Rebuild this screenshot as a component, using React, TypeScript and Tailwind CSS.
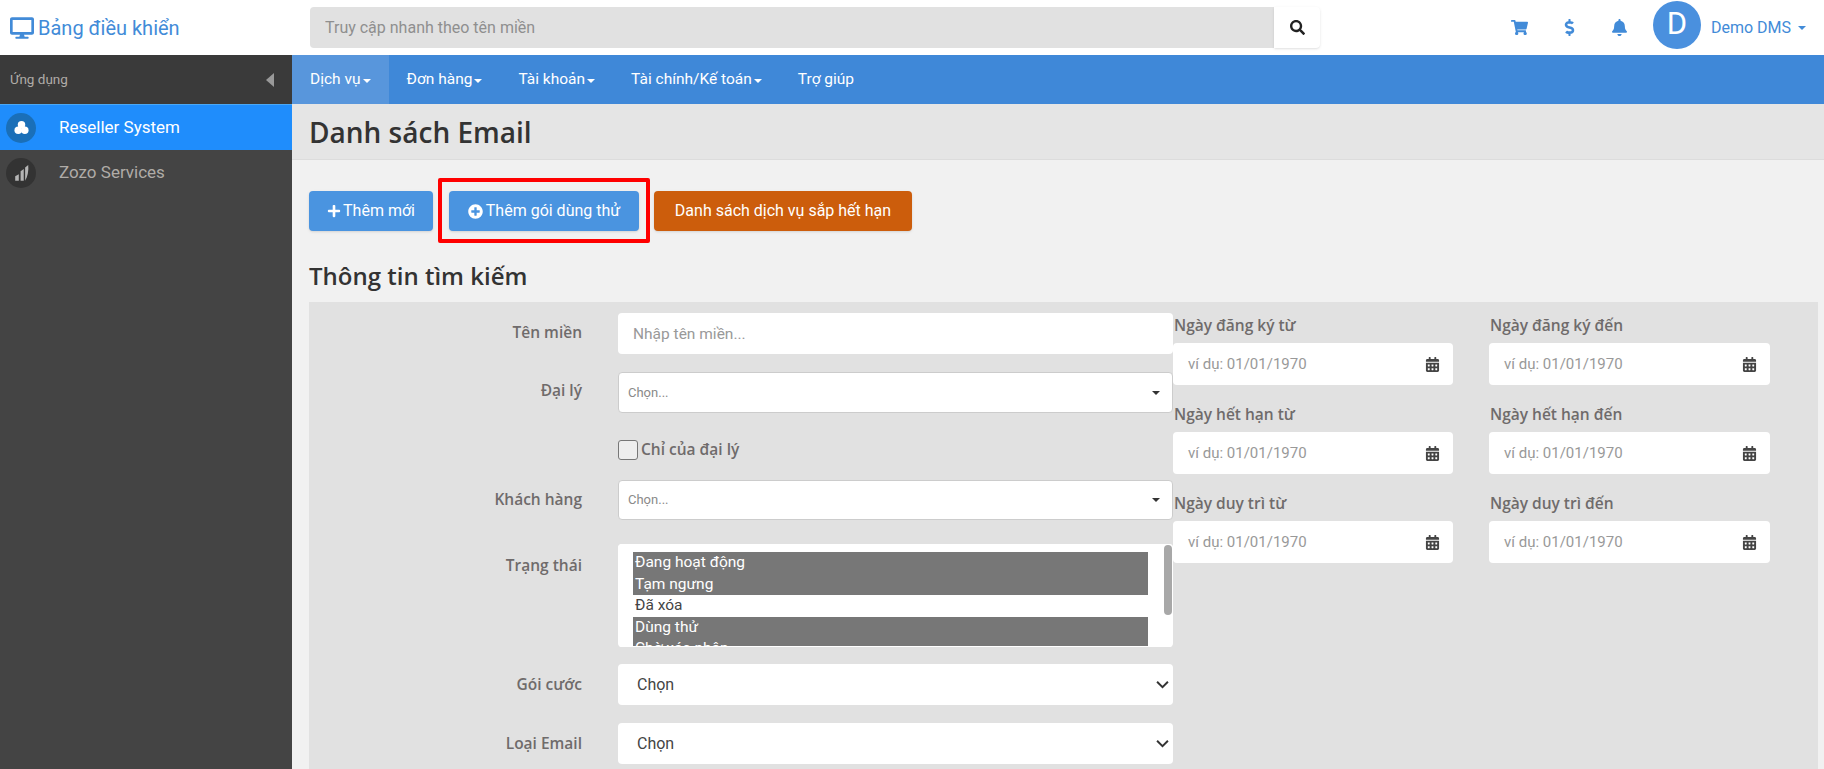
import { FaBell, FaCalendarAlt, FaDesktop, FaDollarSign, FaPlus, FaPlusCircle, FaSearch, FaShoppingCart } from "react-icons/fa";

const navItems = [
  { label: "Dịch vụ", caret: true, active: true },
  { label: "Đơn hàng", caret: true },
  { label: "Tài khoản", caret: true },
  { label: "Tài chính/Kế toán", caret: true },
  { label: "Trợ giúp" },
];

const dateRows = [
  ["Ngày đăng ký từ", "Ngày đăng ký đến"],
  ["Ngày hết hạn từ", "Ngày hết hạn đến"],
  ["Ngày duy trì từ", "Ngày duy trì đến"],
];

function Caret({ className }: { className: string }) {
  return <span className={`inline-block border-x-[4px] border-t-[4px] border-x-transparent ${className}`} />;
}

function ResellerIcon() {
  return (
    <svg viewBox="0 0 16 16" className="w-[15px] h-[15px]" fill="#fff">
      <circle cx="8" cy="5" r="4" />
      <circle cx="4.5" cy="11" r="4" />
      <circle cx="11.5" cy="11" r="4" />
    </svg>
  );
}

function ZozoIcon() {
  return (
    <svg viewBox="0 0 16 20" className="w-[15px] h-[18px]" fill="#b5b5b5">
      <path d="M1 13.5 5 11.5v7H1z" />
      <path d="M7 8l3.500-2.500V18.500H7z" />
      <path d="M12 4 15.500 1c.5 6-.5 13-3.500 17.500z" />
    </svg>
  );
}

function Label({ children, className = "" }: { children: string; className?: string }) {
  return <label className={`font-['Open_Sans',sans-serif] font-semibold text-[15.500px] text-[#6f6b6b] ${className}`}>{children}</label>;
}

function FormRow({ label, className, children }: { label: string; className: string; children: React.ReactNode }) {
  return (
    <div className={`flex gap-[36px] ${className}`}>
      <div className="w-[273px] shrink-0 text-right">
        <Label>{label}</Label>
      </div>
      <div className="w-[555px]">{children}</div>
    </div>
  );
}

function ComboBox() {
  return (
    <div className="h-full bg-white rounded border border-[#ccc] flex items-center justify-between pl-[9px] pr-[12px]">
      <span className="text-[13px] text-[#8a8a8a]">Chọn...</span>
      <Caret className="border-t-[#333]" />
    </div>
  );
}

function NativeSelect() {
  return (
    <div className="h-full bg-white rounded flex items-center justify-between pl-[19px] pr-[4px]">
      <span className="text-[16px] text-[#444]">Chọn</span>
      <svg viewBox="0 0 12 8" className="w-[13px] h-[9px]" fill="none" stroke="#333" strokeWidth="1.800">
        <path d="M1 1.500 6 6.500 11 1.500" />
      </svg>
    </div>
  );
}

function DateField({ label, className }: { label: string; className: string }) {
  return (
    <div className={className}>
      <Label className="block leading-[22px] ml-[1px]">{label}</Label>
      <div className="h-[42px] mt-[7px] bg-white rounded flex items-center justify-between pl-[15px] pr-[13px]">
        <span className="text-[15px] text-[#999]">ví dụ: 01/01/1970</span>
        <FaCalendarAlt className="text-[#444] text-[15px]" />
      </div>
    </div>
  );
}

export default function App() {
  return (
    <div className="w-[1824px] h-[769px] overflow-hidden flex flex-col bg-[#f1f1f1] font-['Roboto',sans-serif]">
      <header className="h-[55px] shrink-0 bg-white flex items-center">
        <div className="w-[292px] shrink-0 flex items-center pl-[10px] text-[#428bd8] text-[20px]">
          <FaDesktop className="text-[24px] mr-[4px]" />
          Bảng điều khiển
        </div>
        <div className="w-[1010px] ml-[18px] h-[41px] flex">
          <input
            placeholder="Truy cập nhanh theo tên miền"
            className="flex-1 bg-[#e1e1e1] rounded-l pl-[15px] text-[16px] placeholder:text-[#8f8f8f] outline-none"
          />
          <button className="w-[46px] bg-white rounded-r shadow flex items-center justify-center text-[#222] text-[15px]">
            <FaSearch />
          </button>
        </div>
        <div className="flex items-center text-[#428bd8] ml-[191px]">
          <FaShoppingCart className="text-[17px]" />
          <FaDollarSign className="text-[17px] ml-[33px]" />
          <FaBell className="text-[17px] ml-[33px]" />
          <div className="w-[48px] h-[48px] -mt-[6px] ml-[25px] rounded-full bg-[#4a90de] text-white text-[31px] flex items-center justify-center">D</div>
          <span className="ml-[10px] text-[16px]">Demo DMS</span>
          <Caret className="ml-[7px] border-t-[#428bd8]" />
        </div>
      </header>

      <div className="flex-1 flex min-h-0">
        <aside className="w-[292px] shrink-0 bg-[#444] text-[#b0aca8]">
          <div className="h-[49px] bg-[#3a3a3a] flex items-center justify-between pl-[10px] pr-[18px] text-[13.500px]">
            Ứng dụng
            <span className="border-y-[7px] border-r-[8px] border-y-transparent border-r-[#999]" />
          </div>
          <div className="h-[46px] bg-[#1f8dfc] border-t border-[#4aa8f5] flex items-center text-white text-[17px]">
            <span className="w-[30px] h-[30px] ml-[6px] mr-[23px] rounded-full bg-[#1a6fb8] flex items-center justify-center">
              <ResellerIcon />
            </span>
            Reseller System
          </div>
          <div className="h-[46px] flex items-center text-[17px]">
            <span className="w-[30px] h-[30px] ml-[6px] mr-[23px] rounded-full bg-[#333] flex items-center justify-center">
              <ZozoIcon />
            </span>
            Zozo Services
          </div>
        </aside>

        <main className="flex-1 min-w-0">
          <nav className="h-[49px] bg-[#3f88d8] flex text-white text-[15.500px]">
            {navItems.map((item) => (
              <div
                key={item.label}
                className={`px-[18px] flex items-center ${item.active ? "bg-[#5896dc]" : ""}`}
              >
                {item.label}
                {item.caret && <Caret className="ml-[2px] mt-[2px] border-t-white" />}
              </div>
            ))}
          </nav>

          <div className="h-[56px] bg-[#e5e5e5] border-b border-[#dcdcdc] flex items-center pl-[17px]">
            <h1 className="font-['Open_Sans',sans-serif] font-semibold text-[28px] text-[#333]">Danh sách Email</h1>
          </div>

          <div className="pl-[17px] pr-[6px]">
            <div className="relative mt-[31px] flex gap-[16px] h-[40px] text-white text-[16px]">
              <button className="w-[124px] rounded bg-[#4a94e0] shadow flex items-center justify-center gap-[2px]">
                <FaPlus className="text-[14px]" />
                Thêm mới
              </button>
              <button className="w-[190px] rounded bg-[#4a94e0] shadow flex items-center justify-center gap-[3px]">
                <FaPlusCircle className="text-[15px]" />
                Thêm gói dùng thử
              </button>
              <button className="w-[258px] -ml-[1px] rounded bg-[#cc5d0c] shadow">Danh sách dịch vụ sắp hết hạn</button>
              <div className="absolute left-[129px] -top-[13px] w-[212px] h-[65px] border-[4px] border-[#f00] rounded-[2px]" />
            </div>

            <h2 className="mt-[27px] h-[44px] font-['Open_Sans',sans-serif] font-semibold text-[24px] leading-[36px] text-[#333]">Thông tin tìm kiếm</h2>

            <div className="bg-[#e1e1e1] h-[500px] flex pt-[11px]">
              <div className="w-[864px] shrink-0">
                <FormRow label="Tên miền" className="h-[41px] leading-[38px]">
                  <input placeholder="Nhập tên miền..." className="w-full h-full bg-white rounded px-[15px] text-[15.500px] placeholder:text-[#999] outline-none" />
                </FormRow>
                <FormRow label="Đại lý" className="h-[41px] mt-[18px] leading-[36px]">
                  <ComboBox />
                </FormRow>
                <div className="flex items-center ml-[309px] mt-[24px] h-[26px]">
                  <span className="w-[20px] h-[20px] bg-[#eee] border border-[#777] rounded-[3px] mr-[3px]" />
                  <Label>Chỉ của đại lý</Label>
                </div>
                <FormRow label="Khách hàng" className="h-[40px] mt-[17px] leading-[38px]">
                  <ComboBox />
                </FormRow>
                <FormRow label="Trạng thái" className="h-[103px] mt-[24px] leading-[42px]">
                  <div className="relative h-full bg-white rounded overflow-hidden pl-[15px] pr-[25px] pt-[8px] text-[15.500px] leading-[21.500px] text-[#444]">
                    <div className="bg-[#777] text-white pl-[2px]">Đang hoạt động</div>
                    <div className="bg-[#777] text-white pl-[2px]">Tạm ngưng</div>
                    <div className="pl-[2px]">Đã xóa</div>
                    <div className="bg-[#777] text-white pl-[2px]">Dùng thử</div>
                    <div className="bg-[#777] text-white pl-[2px]">Chờ xác nhận</div>
                    <div className="absolute top-0 inset-x-0 h-[8px] bg-white" />
                    <div className="absolute bottom-0 inset-x-0 h-[1px] bg-white" />
                    <div className="absolute right-[1px] top-[1px] w-[8px] h-[70px] rounded bg-[#a8a8a8]" />
                  </div>
                </FormRow>
                <FormRow label="Gói cước" className="h-[41px] mt-[17px] leading-[40px]">
                  <NativeSelect />
                </FormRow>
                <FormRow label="Loại Email" className="h-[41px] mt-[18px] leading-[40px]">
                  <NativeSelect />
                </FormRow>
              </div>

              <div className="w-[617px] pt-[1px]">
                {dateRows.map((row, i) => (
                  <div key={row[0]} className={`flex gap-[36px] ${i > 0 ? "mt-[18px]" : ""}`}>
                    <DateField label={row[0]} className="w-[280px]" />
                    <DateField label={row[1]} className="w-[281px]" />
                  </div>
                ))}
              </div>
            </div>
          </div>
        </main>
      </div>
    </div>
  );
}
